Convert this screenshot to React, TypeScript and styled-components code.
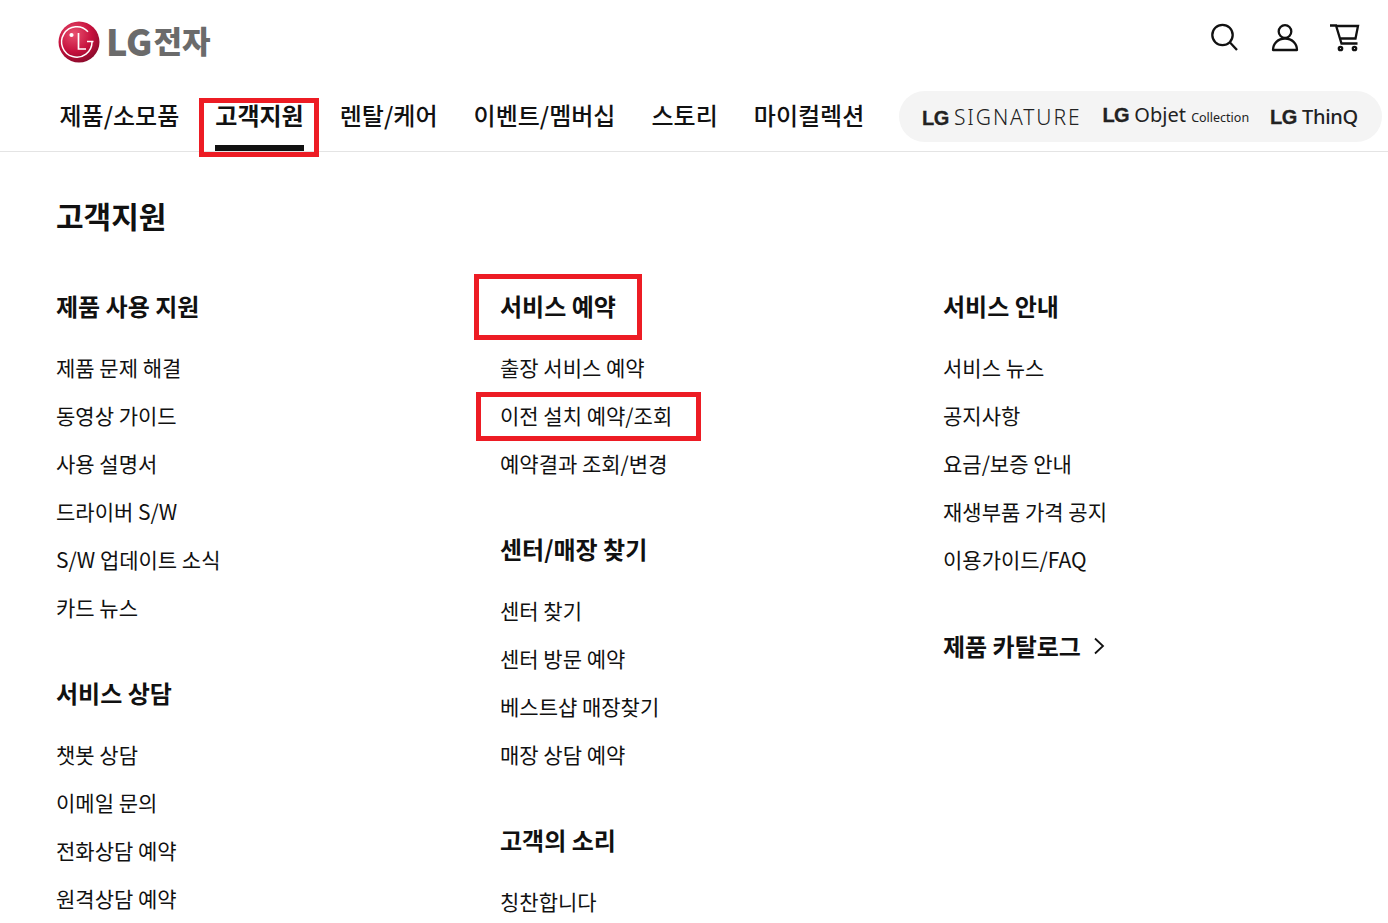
import React from 'react';
import styled, { createGlobalStyle } from 'styled-components';

const COLUMNS = [
  [
    { title: '제품 사용 지원', links: ['제품 문제 해결', '동영상 가이드', '사용 설명서', '드라이버 S/W', 'S/W 업데이트 소식', '카드 뉴스'] },
    { title: '서비스 상담', links: ['챗봇 상담', '이메일 문의', '전화상담 예약', '원격상담 예약'] },
  ],
  [
    { title: '서비스 예약', marked: true, links: ['출장 서비스 예약', '이전 설치 예약/조회', '예약결과 조회/변경'] },
    { title: '센터/매장 찾기', links: ['센터 찾기', '센터 방문 예약', '베스트샵 매장찾기', '매장 상담 예약'] },
    { title: '고객의 소리', links: ['칭찬합니다'] },
  ],
  [{ title: '서비스 안내', links: ['서비스 뉴스', '공지사항', '요금/보증 안내', '재생부품 가격 공지', '이용가이드/FAQ'] }],
];

const NAV = ['제품/소모품', '고객지원', '렌탈/케어', '이벤트/멤버십', '스토리', '마이컬렉션'];

export default function App() {
  return (
    <Page>
      <GlobalStyle />
      <Header>
        <TopBar>
          <Logo>
            <LogoMark viewBox="0 0 42 42">
              <defs>
                <radialGradient id="lg" cx="38%" cy="30%" r="80%">
                  <stop offset="0" stopColor="#e8506f" />
                  <stop offset="0.55" stopColor="#c5103c" />
                  <stop offset="1" stopColor="#7d0a28" />
                </radialGradient>
              </defs>
              <circle cx="21" cy="21" r="20.500" fill="url(#lg)" />
              <path d="M34 21a15.200 15.200 0 1 1-4-10.300" fill="none" stroke="#fff" strokeWidth="1.500" />
              <circle cx="13.500" cy="14" r="2.100" fill="#fff" />
              <path d="M20.500 12v16h7.500M29 20.500h6.500" fill="none" stroke="#fff" strokeWidth="1.700" />
            </LogoMark>
            <LogoText>
              LG<LogoHangul>전자</LogoHangul>
            </LogoText>
          </Logo>
          <Utility>
            <svg width="30" height="30" viewBox="0 0 30 30" fill="none" stroke="#111" strokeWidth="2.300">
              <circle cx="12.500" cy="12" r="10.200" />
              <path d="M20 19.500l7 7.500" />
            </svg>
            <svg width="30" height="30" viewBox="0 0 30 30" fill="none" stroke="#111" strokeWidth="2.300" strokeLinejoin="round">
              <circle cx="15" cy="8.500" r="6.300" />
              <path d="M3 27c0-6.500 5-11.500 12-11.500s12 5 12 11.500z" />
            </svg>
            <svg width="30" height="30" viewBox="0 0 30 30" fill="none" stroke="#111" strokeWidth="2.300">
              <path d="M0 2.500h6l5.500 18h16" />
              <path d="M6.500 3h21.500l-2.500 12.500H10.500" />
              <circle cx="10.500" cy="25.500" r="1.700" />
              <circle cx="24.500" cy="25.500" r="1.700" />
            </svg>
          </Utility>
        </TopBar>
        <NavRow>
          <Nav>
            {NAV.map(label => (
              <NavItem key={label} active={label === '고객지원'}>
                {label}
                {label === '고객지원' ? <NavMark /> : null}
              </NavItem>
            ))}
          </Nav>
          <BrandPill>
            <Brand>
              <b>LG</b> <Thin>SIGNATURE</Thin>
            </Brand>
            <Brand lifted>
              <b>LG</b> Objet <Small>Collection</Small>
            </Brand>
            <Brand>
              <b>LG</b> <Medium>ThinQ</Medium>
            </Brand>
          </BrandPill>
        </NavRow>
      </Header>
      <Content>
        <PageTitle>고객지원</PageTitle>
        <Columns>
          {COLUMNS.map((groups, i) => (
            <Column key={i} index={i}>
              {groups.map(group => (
                <Group key={group.title}>
                  <GroupTitle>
                    {group.title}
                    {group.marked ? <TitleMark /> : null}
                  </GroupTitle>
                  <LinkList>
                    {group.links.map(link => (
                      <LinkItem key={link}>
                        {link}
                        {link === '이전 설치 예약/조회' ? <LinkMark /> : null}
                      </LinkItem>
                    ))}
                  </LinkList>
                </Group>
              ))}
              {i === 2 ? (
                <CatalogTitle>
                  제품 카탈로그
                  <svg width="14" height="20" viewBox="0 0 14 20" fill="none" stroke="#111" strokeWidth="1.800">
                    <path d="M3 2.500l8 7.500-8 7.500" />
                  </svg>
                </CatalogTitle>
              ) : null}
            </Column>
          ))}
        </Columns>
      </Content>
    </Page>
  );
}

const GlobalStyle = createGlobalStyle`
  html, body {
    margin: 0;
    padding: 0;
    background: #fff;
    overflow: hidden;
  }
  body {
    font-family: "Noto Sans CJK KR", "Noto Sans", sans-serif;
    color: #111;
  }
`;

const Page = styled.div`
  width: 1388px;
  height: 923px;
  overflow: hidden;
`;

const Header = styled.header`
  border-bottom: 1px solid #e4e4e4;
`;

const TopBar = styled.div`
  display: flex;
  justify-content: space-between;
  align-items: center;
  height: 82px;
  padding: 0 28px 0 58px;
`;

const Logo = styled.div`
  display: flex;
  align-items: center;
  gap: 6px;
  margin-top: 2px;
`;

const LogoMark = styled.svg`
  width: 42px;
  height: 42px;
`;

const LogoText = styled.span`
  display: flex;
  align-items: center;
  margin-top: -4px;
  font-size: 36px;
  line-height: 42px;
  font-weight: 900;
  color: #6b6b6b;
`;

const LogoHangul = styled.span`
  margin-left: 1px;
  font-size: 31px;
`;

const Utility = styled.div`
  display: flex;
  gap: 30px;
  margin-bottom: 6px;
`;

const NavRow = styled.div`
  display: flex;
  justify-content: space-between;
  align-items: flex-start;
  box-sizing: border-box;
  height: 69px;
  padding: 9px 6px 0 59.500px;
`;

const Nav = styled.nav`
  display: flex;
  gap: 36.100px;
`;

const NavItem = styled.div<{ active?: boolean }>`
  position: relative;
  height: 60px;
  padding-top: 6px;
  box-sizing: border-box;
  font-size: 24px;
  line-height: 36px;
  font-weight: ${({ active }) => (active ? 700 : 500)};
  white-space: nowrap;
  ${({ active }) => active && 'border-bottom: 6px solid #111;'}
`;

const NavMark = styled.span`
  position: absolute;
  left: -16px;
  right: -15px;
  top: 7px;
  height: 59px;
  box-sizing: border-box;
  border: 5px solid #ed1c24;
`;

const BrandPill = styled.div`
  display: flex;
  align-items: center;
  justify-content: space-between;
  width: 483px;
  height: 51px;
  box-sizing: border-box;
  padding: 0 24px 0 23px;
  border-radius: 26px;
  background: #f4f4f4;
`;

const Brand = styled.span<{ lifted?: boolean }>`
  font-family: "Noto Sans", sans-serif;
  font-size: 20px;
  font-weight: 400;
  color: #222;
  white-space: nowrap;
  ${({ lifted }) => lifted && 'margin-bottom: 4px;'}
  b {
    font-family: "Liberation Sans", sans-serif;
    font-weight: 700;
    letter-spacing: -0.500px;
    -webkit-text-stroke: 0.300px #222;
  }
`;

const Thin = styled.span`
  font-weight: 300;
  font-size: 21px;
  letter-spacing: 1.900px;
`;

const Medium = styled.span`
  font-weight: 500;
  letter-spacing: -0.300px;
`;

const Small = styled.span`
  font-size: 12.500px;
`;

const Content = styled.main`
  padding: 41px 0 0 56px;
`;

const PageTitle = styled.h1`
  margin: 0;
  font-size: 30px;
  line-height: 44px;
  font-weight: 700;
`;

const Columns = styled.div`
  display: flex;
  margin-top: 51px;
`;

const Column = styled.div<{ index: number }>`
  width: ${({ index }) => (index === 0 ? '444px' : index === 1 ? '443px' : '400px')};
  display: flex;
  flex-direction: column;
  gap: 44px;
`;

const Group = styled.section``;

const GroupTitle = styled.h2`
  position: relative;
  width: max-content;
  margin: 0 0 19px;
  font-size: 24px;
  line-height: 36px;
  font-weight: 700;
`;

const TitleMark = styled.span`
  position: absolute;
  left: -26px;
  right: -26px;
  top: -14px;
  height: 66px;
  box-sizing: border-box;
  border: 5px solid #ed1c24;
`;

const LinkList = styled.ul`
  list-style: none;
  margin: 0;
  padding: 0;
`;

const LinkItem = styled.li`
  position: relative;
  width: max-content;
  font-size: 21px;
  line-height: 48px;
  font-weight: 400;
`;

const LinkMark = styled.span`
  position: absolute;
  left: -24px;
  right: -29px;
  top: 1px;
  height: 49px;
  box-sizing: border-box;
  border: 5px solid #ed1c24;
`;

const CatalogTitle = styled.h2`
  display: flex;
  align-items: center;
  gap: 11px;
  margin: 1px 0 0;
  font-size: 24px;
  line-height: 36px;
  font-weight: 700;
`;
